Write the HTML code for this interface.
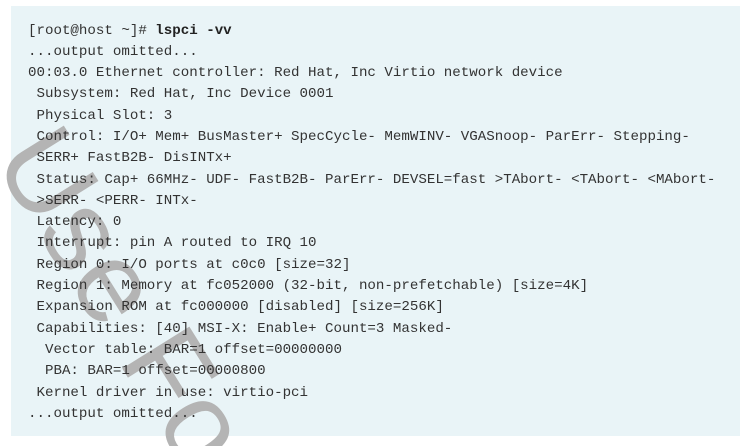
<!DOCTYPE html>
<html><head><style>
html,body{margin:0;padding:0;background:#fff;width:751px;height:446px;overflow:hidden;position:relative}
.box{position:absolute;left:11px;top:6px;width:729px;height:430px;background:#e9f4f7}
pre{position:absolute;left:28px;top:20.5px;margin:0;font-family:"Liberation Mono",monospace;font-size:14.15px;line-height:21.3px;color:#333}
b{font-weight:bold;color:#222}
svg{position:absolute;left:0;top:0}
</style></head><body>
<div class="box"></div>
<svg width="751" height="446"><g transform="translate(-8,160) rotate(58)"><text x="0" y="0" font-family="Liberation Sans" font-size="115" fill="#b4b4b4">Use For</text></g></svg>
<pre>[root@host ~]# <b>lspci -vv</b>
...output omitted...
00:03.0 Ethernet controller: Red Hat, Inc Virtio network device
 Subsystem: Red Hat, Inc Device 0001
 Physical Slot: 3
 Control: I/O+ Mem+ BusMaster+ SpecCycle- MemWINV- VGASnoop- ParErr- Stepping-
 SERR+ FastB2B- DisINTx+
 Status: Cap+ 66MHz- UDF- FastB2B- ParErr- DEVSEL=fast &gt;TAbort- &lt;TAbort- &lt;MAbort-
 &gt;SERR- &lt;PERR- INTx-
 Latency: 0
 Interrupt: pin A routed to IRQ 10
 Region 0: I/O ports at c0c0 [size=32]
 Region 1: Memory at fc052000 (32-bit, non-prefetchable) [size=4K]
 Expansion ROM at fc000000 [disabled] [size=256K]
 Capabilities: [40] MSI-X: Enable+ Count=3 Masked-
  Vector table: BAR=1 offset=00000000
  PBA: BAR=1 offset=00000800
 Kernel driver in use: virtio-pci
...output omitted...</pre>
</body></html>
